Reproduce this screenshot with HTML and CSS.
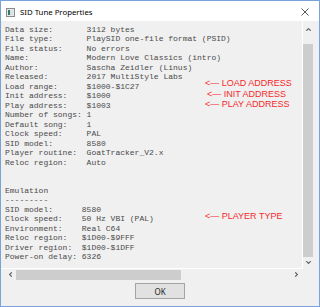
FILE: index.html
```html
<!DOCTYPE html>
<html>
<head>
<meta charset="utf-8">
<link rel="stylesheet" href="styles.css">
</head>
<body>
<div class="window">
  <div class="titlebar">
    <svg class="app-icon" width="9" height="9" viewBox="0 0 9 9">
      <rect x="0.5" y="0.5" width="8" height="8" fill="#e8e8e8" stroke="#8a8a8a"/>
      <rect x="2" y="2" width="2" height="5" fill="#2f7c6e"/>
      <rect x="4" y="2" width="3" height="5" fill="#d6e2e6"/>
    </svg>
    <span class="title">SID Tune Properties</span>
    <svg class="close" width="8" height="8" viewBox="0 0 8 8">
      <path d="M0.5 0.5 L7.5 7.5 M7.5 0.5 L0.5 7.5" stroke="#444" stroke-width="0.9" fill="none"/>
    </svg>
  </div>
  <div class="client">
    <div class="editrow">
      <div class="edit">
        <div class="info">
          <span class="line">Data size:       3112 bytes</span>
          <span class="line">File type:       PlaySID one-file format (PSID)</span>
          <span class="line">File status:     No errors</span>
          <span class="line">Name:            Modern Love Classics (intro)</span>
          <span class="line">Author:          Sascha Zeidler (Linus)</span>
          <span class="line">Released:        2017 MultiStyle Labs</span>
          <span class="line">Load range:      $1000-$1C27</span>
          <span class="line">Init address:    $1000</span>
          <span class="line">Play address:    $1003</span>
          <span class="line">Number of songs: 1</span>
          <span class="line">Default song:    1</span>
          <span class="line">Clock speed:     PAL</span>
          <span class="line">SID model:       8580</span>
          <span class="line">Player routine:  GoatTracker_V2.x</span>
          <span class="line">Reloc region:    Auto</span>
          <span class="line blank"></span>
          <span class="line blank"></span>
          <span class="line">Emulation</span>
          <span class="line">---------</span>
          <span class="line">SID model:      8580</span>
          <span class="line">Clock speed:    50 Hz VBI (PAL)</span>
          <span class="line">Environment:    Real C64</span>
          <span class="line">Reloc region:   $1D00-$9FFF</span>
          <span class="line">Driver region:  $1D00-$1DFF</span>
          <span class="line">Power-on delay: 6326</span>
        </div>
        <span class="note note-load">&lt;— LOAD ADDRESS</span>
        <span class="note note-init">&lt;— INIT ADDRESS</span>
        <span class="note note-play">&lt;— PLAY ADDRESS</span>
        <span class="note note-type">&lt;— PLAYER TYPE</span>
      </div>
      <div class="vscroll">
        <svg class="chev-up" width="5" height="3" viewBox="0 0 5 3"><path d="M0.3 2.8 L2.5 0.6 L4.7 2.8" stroke="#606060" stroke-width="1.1" fill="none"/></svg>
        <div class="vthumb"></div>
        <svg class="chev-down" width="5" height="3" viewBox="0 0 5 3"><path d="M0.3 0.2 L2.5 2.4 L4.7 0.2" stroke="#606060" stroke-width="1.1" fill="none"/></svg>
      </div>
    </div>
    <div class="hscroll">
      <svg class="chev-left" width="3" height="5" viewBox="0 0 3 5"><path d="M2.8 0.3 L0.6 2.5 L2.8 4.7" stroke="#606060" stroke-width="1.1" fill="none"/></svg>
      <div class="hthumb"></div>
      <svg class="chev-right" width="3" height="5" viewBox="0 0 3 5"><path d="M0.2 0.3 L2.4 2.5 L0.2 4.7" stroke="#606060" stroke-width="1.1" fill="none"/></svg>
    </div>
    <div class="buttons">
      <button class="ok">OK</button>
    </div>
  </div>
</div>
</body>
</html>
```
FILE: styles.css
```css
html, body {
  margin: 0;
  padding: 0;
  background: #ffffff;
}
.window {
  width: 320px;
  height: 307px;
  box-sizing: border-box;
  border: 1px solid #79a2da;
  display: flex;
  flex-direction: column;
  background: #f0f0f0;
}
.titlebar {
  height: 20px;
  flex: none;
  background: #ffffff;
  display: flex;
  align-items: center;
  padding-left: 5px;
  padding-right: 5px;
}
.app-icon {
  display: block;
  margin-top: 3px;
}
.title {
  font-family: "Noto Sans", "Open Sans", sans-serif;
  font-size: 7.8px;
  color: #000;
  margin-left: 5px;
  flex: 1;
  margin-top: 2px;
}
.close {
  display: block;
  margin-right: 5px;
  margin-top: 2px;
}
.client {
  flex: 1;
  display: flex;
  flex-direction: column;
  background: #f0f0f0;
}
.editrow {
  display: flex;
  height: 248px;
  flex: none;
}
.edit {
  position: relative;
  width: 302px;
  box-sizing: border-box;
  border-right: 1px solid #ffffff;
  border-bottom: 1px solid #ffffff;
  padding: 4px 0 0 4px;
  overflow: hidden;
}
.info {
  display: flex;
  flex-direction: column;
  align-items: flex-start;
  font-family: "Liberation Mono", monospace;
  font-size: 8px;
  line-height: 9.48px;
  color: #4a4a4a;
}
.line {
  display: block;
  white-space: pre;
  height: 9.48px;
}
.note {
  position: absolute;
  font-family: "Liberation Sans", Arial, sans-serif;
  font-size: 9px;
  line-height: 10px;
  color: #f52a2a;
  white-space: nowrap;
}
.note-load { left: 204px; top: 57px; }
.note-init { left: 206px; top: 68px; }
.note-play { left: 204px; top: 78px; }
.note-type { left: 204px; top: 190px; }
.vscroll {
  width: 16px;
  height: 247px;
  display: flex;
  flex-direction: column;
  align-items: flex-start;
}
.chev-up {
  display: block;
  margin: 7px 0 0 3px;
}
.vthumb {
  width: 10px;
  height: 213px;
  margin-top: 13px;
  background: #cdcdcd;
}
.chev-down {
  display: block;
  margin: 4px 0 0 3px;
}
.hscroll {
  width: 301px;
  height: 11px;
  flex: none;
  display: flex;
  align-items: center;
  box-sizing: border-box;
  padding-left: 8px;
}
.chev-left {
  display: block;
}
.hthumb {
  width: 165px;
  height: 10px;
  margin-left: 4px;
  background: #cdcdcd;
}
.chev-right {
  display: block;
  margin-left: auto;
  margin-right: 4px;
}
.buttons {
  flex: 1;
  display: flex;
  justify-content: center;
  align-items: flex-start;
  padding-top: 3px;
}
.ok {
  width: 50px;
  height: 16px;
  box-sizing: border-box;
  border: 1px solid #a3a3a3;
  background: #e1e1e1;
  font-family: "Noto Sans", "Liberation Sans", sans-serif;
  font-size: 8px;
  color: #222;
  padding: 0;
  margin: 0;
}
```
